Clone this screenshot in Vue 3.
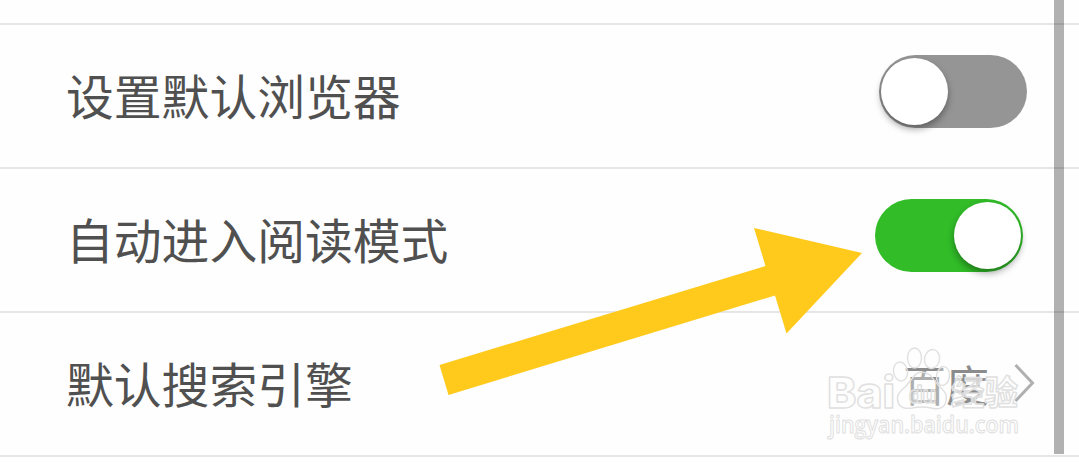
<script setup>
const rows = [
  { label: '设置默认浏览器', toggle: true, on: false },
  { label: '自动进入阅读模式', toggle: true, on: true },
  { label: '默认搜索引擎', value: '百度' },
]
</script>

<template>
  <main class="settings">
    <section class="list">
      <div v-for="row in rows" :key="row.label" class="row">
        <span class="label">{{ row.label }}</span>
        <span v-if="row.toggle" class="switch" :class="{ on: row.on }"><i class="knob"></i></span>
        <span v-else class="choice">
          <span class="value">{{ row.value }}</span>
          <svg class="chevron" width="22" height="40" viewBox="0 0 22 40">
            <path d="M1.5 2 L18.5 20 L1.500 38" fill="none" stroke="#b0b0b0" stroke-width="3" />
          </svg>
        </span>
      </div>
    </section>
    <div class="scrollbar"></div>
    <svg class="arrow" width="1079" height="463" viewBox="0 0 1079 463">
      <polygon points="439.5,365 765.5,266 754,228 862,253 786.5,333.5 775,295.5 448.5,395" fill="#ffca1b" />
    </svg>
    <svg class="watermark" width="1079" height="463" viewBox="0 0 1079 463">
      <g class="mark">
        <text x="827" y="407.5" class="brand" textLength="68" lengthAdjust="spacingAndGlyphs">Bai</text>
        <text x="951" y="404.5" class="cn" textLength="67" lengthAdjust="spacingAndGlyphs">经验</text>
        <text x="829" y="433" class="site" textLength="190" lengthAdjust="spacingAndGlyphs">jingyan.baidu.com</text>
        <ellipse cx="914.5" cy="358" rx="7" ry="10" />
        <ellipse cx="932" cy="359" rx="7.5" ry="9.5" transform="rotate(10 932 359)" />
        <ellipse cx="900.5" cy="371.5" rx="7" ry="9.5" transform="rotate(-10 900.5 371.5)" />
        <ellipse cx="943" cy="376" rx="6.5" ry="9.5" transform="rotate(8 943 376)" />
        <path d="M922 372 C914 372 911 382 905 387 C899 392 896 396 898 402 C900 409 906 409 912 408 Q922 406 931 408 C938 410 945 408 946 401 C948 394 943 390 939 386 C933 379 930 372 922 372 Z" />
        <text x="909" y="403" class="du" textLength="27" lengthAdjust="spacingAndGlyphs">du</text>
      </g>
    </svg>
  </main>
</template>

<style>
body {
  margin: 0;
  background: #fefefe;
}
</style>

<style scoped>
.settings {
  position: relative;
  width: 1079px;
  height: 463px;
  overflow: hidden;
  background: #fefefe;
  font-family: 'Noto Sans CJK SC', sans-serif;
}
.list {
  margin-top: 23px;
  border-top: 2px solid #e6e6e6;
}
.row {
  box-sizing: border-box;
  height: 144px;
  padding: 0 52px 0 66px;
  display: flex;
  align-items: center;
  justify-content: space-between;
  border-bottom: 2px solid #e6e6e6;
}
.label {
  font-size: 47.8px;
  line-height: 70px;
  color: #505050;
  padding-bottom: 3px;
}
.switch {
  box-sizing: border-box;
  width: 148px;
  height: 73px;
  margin-bottom: 10px;
  padding: 3px 2px;
  display: flex;
  border-radius: 37px;
  background: #959595;
}
.switch.on {
  margin-right: 4px;
  justify-content: flex-end;
  background: #31bc28;
}
.knob {
  width: 67px;
  height: 67px;
  border-radius: 50%;
  background: #fff;
  box-shadow: 0 4px 7px rgba(0, 0, 0, 0.36);
}
.choice {
  display: flex;
  align-items: center;
  margin-right: -9px;
}
.value {
  font-size: 43px;
  line-height: 60px;
  color: #8c8c8c;
  padding-bottom: 3px;
  margin-right: 25px;
}
.chevron {
  margin-bottom: 2px;
}
.scrollbar {
  position: absolute;
  top: 0;
  left: 1054px;
  width: 10px;
  height: 454px;
  background: rgba(0, 0, 0, 0.3);
}
.arrow,
.watermark {
  position: absolute;
  top: 0;
  left: 0;
}
.mark {
  fill: rgba(255, 255, 255, 0.3);
  stroke: #e0e0e0;
  stroke-width: 1.4;
  stroke-linejoin: round;
}
.brand {
  font: 800 43px Inter, sans-serif;
}
.cn {
  font: bold 34px 'Noto Sans CJK SC', sans-serif;
  fill: rgba(255, 255, 255, 0.65);
}
.du {
  font: 800 24px Inter, sans-serif;
}
.site {
  font: 600 23px 'Open Sans', sans-serif;
  stroke-width: 1;
}
</style>
